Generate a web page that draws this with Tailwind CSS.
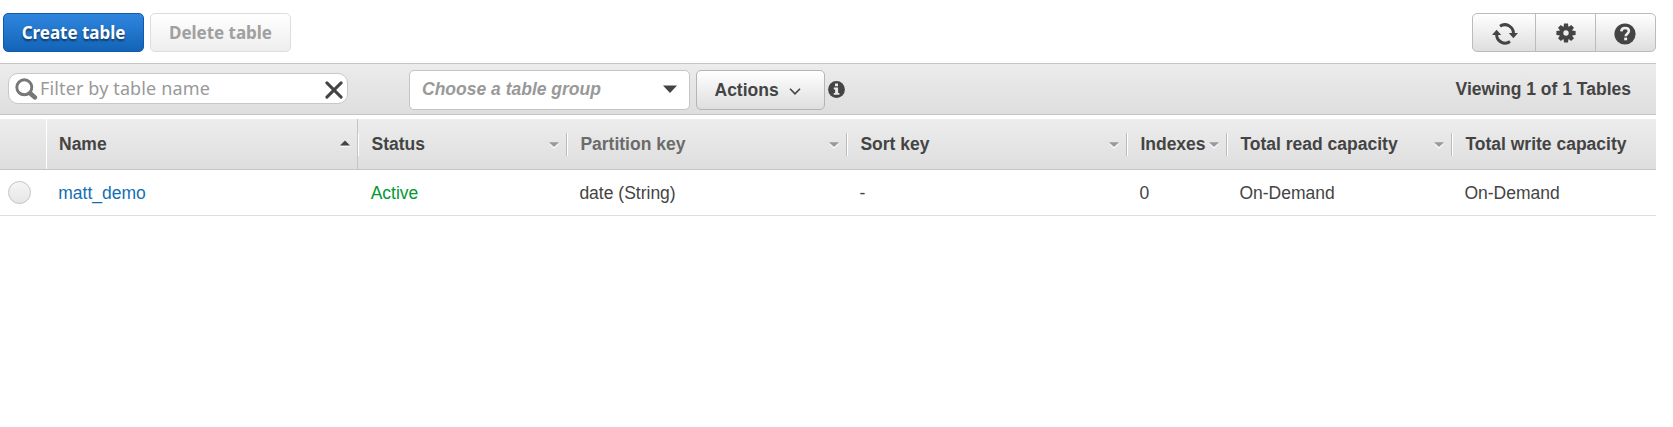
<!DOCTYPE html>
<html lang="en">
<head>
<meta charset="utf-8">
<title>Tables</title>
<script src="https://cdn.jsdelivr.net/npm/@tailwindcss/browser@4"></script>
</head>
<body class="bg-white overflow-hidden font-['Liberation_Sans',Arial,sans-serif] text-[17.5px] leading-5 text-[#444]">
<main class="w-[1656px]">
  <div class="flex h-[63px] pt-[13px] pl-[3px] font-['Noto_Sans','Open_Sans',sans-serif] font-bold">
    <button class="h-[39px] w-[141px] rounded-[5px] border border-[#1059ab] bg-linear-to-b from-[#2f86de] to-[#1264b8] text-[17px] text-white whitespace-nowrap tracking-[-0.02px] text-shadow-[0_2px_2px_rgb(0_0_0/0.5)]">Create table</button>
    <button class="ml-1.5 h-[39px] w-[141px] rounded-[5px] border border-[#ddd] bg-linear-to-b from-white to-[#eee] text-[17px] text-[#a0a0a0] whitespace-nowrap tracking-[-0.02px]">Delete table</button>
    <div class="ml-auto flex h-[39px] w-[184px] rounded-[5px] border border-[#bbb] bg-linear-to-b from-white to-[#dedede]">
      <button class="flex w-[63px] items-center justify-center border-r border-[#bbb]">
        <svg class="mt-0.5 ml-0.5 h-[22px] w-[26px]" viewBox="0 0 26 22" fill="none" stroke="#444" stroke-width="3"><path d="M8 3.2A8.6 8.6 0 0 1 21.4 10.5M18 18.6A8.6 8.6 0 0 1 4.6 11.5"/><path d="M16.8 10h9.2L21.4 15.3zM0 12h9.2L4.6 6.7z" fill="#444" stroke="none"/></svg>
      </button>
      <button class="flex w-[60px] items-center justify-center border-r border-[#bbb]">
        <svg class="h-5 w-5" viewBox="-10 -10 20 20"><g fill="#444"><circle r="6.8"/><path d="M-2-9.6h4l.5 4h-5zM-2 9.6h4l.5-4h-5zM-9.6-2v4l4 .5v-5zM9.6-2v4l-4 .5v-5z"/><path transform="rotate(45)" d="M-2-9.3h4l.5 4h-5zM-2 9.3h4l.5-4h-5zM-9.3-2v4l4 .5v-5zM9.3-2v4l-4 .5v-5z"/></g><circle r="2.7" fill="#eee"/></svg>
      </button>
      <button class="flex flex-1 items-center justify-center pr-px">
        <svg class="mt-0.5 h-[22px] w-[22px]" viewBox="0 0 22 22"><circle cx="11" cy="11" r="10.6" fill="#444"/><path d="M7.3 8.3C7.6 5.9 9 5 11.1 5c2.2 0 3.8 1.1 3.8 3.1 0 2.5-3.2 2.6-3.2 5.1" fill="none" stroke="#eee" stroke-width="2.6"/><path d="M10.2 14.6h2.9v2.7h-2.9z" fill="#eee"/></svg>
      </button>
    </div>
  </div>

  <div class="flex h-[52px] items-start border-y border-[#c5c5c5] bg-linear-to-b from-[#ececec] to-[#dedede] pt-[6px] pl-2">
    <label class="mt-[3px] flex h-[31px] w-[340px] items-center rounded-[10px] border border-[#c8c8c8] bg-white pl-[6px] pr-1 font-['Noto_Sans','Open_Sans',sans-serif] text-[#999]">
      <svg class="mt-0.5 h-[23px] w-[23px]" viewBox="0 0 23 23" fill="none" stroke="#777"><circle cx="9.3" cy="9.3" r="7.5" stroke-width="2.9"/><path d="M15.2 15.2l4.6 4.2" stroke-width="4.6" stroke-linecap="round"/></svg>
      <span class="ml-[2px] -mt-0.5 flex-1 whitespace-nowrap text-[18px] tracking-[0.13px]">Filter by table name</span>
      <svg class="mt-[3px] h-[18px] w-[18px]" viewBox="0 0 18 18" fill="none" stroke="#444" stroke-width="3" stroke-linecap="round"><path d="M1.9 1.9l14.2 14.2M16.1 1.9L1.9 16.1"/></svg>
    </label>
    <div class="ml-[61px] flex h-10 w-[281px] items-center rounded-[5px] border border-[#c5c5c5] bg-white pr-3 pl-3 font-bold italic text-[#999]">
      <span class="-mt-0.5 flex-1">Choose a table group</span>
      <svg class="-mt-0.5 h-2 w-[14px]" viewBox="0 0 14 8"><path d="M0 .5h14L7 8z" fill="#444"/></svg>
    </div>
    <button class="ml-1.5 flex h-10 w-[129px] items-center rounded-[5px] border border-[#b5b5b5] bg-linear-to-b from-white to-[#dedede] pl-[17.5px] font-bold">
      <span>Actions</span>
      <svg class="mt-[3px] ml-[10px] h-[7px] w-3" viewBox="0 0 12 7" fill="none" stroke="#444" stroke-width="1.6"><path d="M1 .8l5 5 5-5"/></svg>
    </button>
    <svg class="mt-[11px] ml-[3px] h-[17px] w-[17px]" viewBox="0 0 17 17"><circle cx="8.5" cy="8.5" r="8.4" fill="#444"/><path d="M7 2.5h3v2.7H7zM5.8 6.6h4.3v5.3h1.3v1.8H5.7v-1.8h1.4V8.4H5.8z" fill="#e8e8e8"/></svg>
    <span class="mt-[9px] mr-[25px] ml-auto font-bold">Viewing 1 of 1 Tables</span>
  </div>

  <div class="mt-1 grid h-[51px] grid-cols-[46px_312px_210px_280px_280px_100px_225px_203px] items-center border-b border-[#c5c5c5] bg-linear-to-b from-[#ededed] to-[#dedede] font-bold whitespace-nowrap">
    <div></div>
    <div class="flex h-full items-center border-r border-l border-r-[#c5c5c5] border-l-white pr-[7px] pl-3"><span class="flex-1">Name</span><svg class="-mt-0.5 h-[7px] w-[10px]" viewBox="0 0 10 7"><path d="M0 6h10v1H0z" fill="#f8f8f8"/><path d="M0 5.5h10L5 .5z" fill="#444"/></svg></div>
    <div class="flex h-[23px] items-center border-l border-white pl-[12.5px]"><span class="flex-1">Status</span><svg class="mt-0.5 h-[7px] w-[10px]" viewBox="0 0 10 7"><path d="M0 1.5h10L5 7z" fill="#f8f8f8"/><path d="M0 .2h10L5 5z" fill="#999"/></svg><i class="ml-[7px] h-[23px] w-0.5 border-l border-[#bbb] bg-white"></i></div>
    <div class="flex h-[23px] items-center pl-[12.4px] text-[#6b6b6b]"><span class="flex-1">Partition key</span><svg class="mt-0.5 h-[7px] w-[10px]" viewBox="0 0 10 7"><path d="M0 1.5h10L5 7z" fill="#f8f8f8"/><path d="M0 .2h10L5 5z" fill="#999"/></svg><i class="ml-[7px] h-[23px] w-0.5 border-l border-[#bbb] bg-white"></i></div>
    <div class="flex h-[23px] items-center pl-[12.4px]"><span class="flex-1">Sort key</span><svg class="mt-0.5 h-[7px] w-[10px]" viewBox="0 0 10 7"><path d="M0 1.5h10L5 7z" fill="#f8f8f8"/><path d="M0 .2h10L5 5z" fill="#999"/></svg><i class="ml-[7px] h-[23px] w-0.5 border-l border-[#bbb] bg-white"></i></div>
    <div class="flex h-[23px] items-center pl-[12.4px]"><span class="flex-1">Indexes</span><svg class="mt-0.5 h-[7px] w-[10px]" viewBox="0 0 10 7"><path d="M0 1.5h10L5 7z" fill="#f8f8f8"/><path d="M0 .2h10L5 5z" fill="#999"/></svg><i class="ml-[7px] h-[23px] w-0.5 border-l border-[#bbb] bg-white"></i></div>
    <div class="flex h-[23px] items-center pl-[12.4px]"><span class="flex-1">Total read capacity</span><svg class="mt-0.5 h-[7px] w-[10px]" viewBox="0 0 10 7"><path d="M0 1.5h10L5 7z" fill="#f8f8f8"/><path d="M0 .2h10L5 5z" fill="#999"/></svg><i class="ml-[7px] h-[23px] w-0.5 border-l border-[#bbb] bg-white"></i></div>
    <div class="pl-[12.4px]">Total write capacity</div>
  </div>

  <div class="grid h-[46px] grid-cols-[46px_312px_210px_280px_280px_100px_225px_203px] items-center border-b border-[#ddd] whitespace-nowrap">
    <div class="ml-2 h-[23px] w-[23px] rounded-full border border-[#c4c4c4] bg-linear-to-b from-[#f5f5f5] to-[#e6e6e6]"></div>
    <div class="pl-[12.3px] text-[#146eb4]">matt_demo</div>
    <div class="pl-[12.7px] text-[#009933]">Active</div>
    <div class="pl-[11.4px]">date (String)</div>
    <div class="pl-[11.4px]">-</div>
    <div class="pl-[11.4px]">0</div>
    <div class="pl-[11.4px]">On-Demand</div>
    <div class="pl-[11.4px]">On-Demand</div>
  </div>
</main>
</body>
</html>
